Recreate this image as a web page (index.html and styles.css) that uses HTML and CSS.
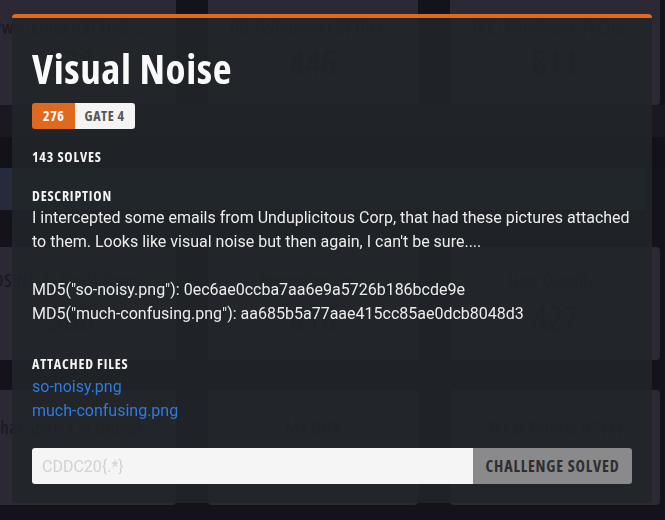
FILE: index.html
```html
<!DOCTYPE html>
<html lang="en">
<head>
<meta charset="utf-8">
<title>Visual Noise</title>
<link rel="stylesheet" href="styles.css">
</head>
<body>
<div class="board">
  <div class="row row-1">
    <div class="card"><div class="card-title">[Pwn (Linux)-3] Find S...</div><div class="card-num">320</div></div>
    <div class="card"><div class="card-title">[RE (Windows)-2] Diss...</div><div class="card-num">446</div></div>
    <div class="card"><div class="card-title">[RE (Windows)-3] Che...</div><div class="card-num">811</div></div>
  </div>
  <div class="band band-a"></div>
  <div class="band band-b"></div>
  <div class="band band-blue"></div>
  <div class="row row-2">
    <div class="card"><div class="card-title">[OSINT-1] Kinda Trans...</div><div class="card-num">380</div></div>
    <div class="card"><div class="card-title">Regarding cip...</div><div class="card-num">416</div></div>
    <div class="card"><div class="card-title">How QueeR...</div><div class="card-num">427</div></div>
  </div>
  <div class="row row-3">
    <div class="card"><div class="card-title">What Sphinx of Undup...</div><div class="card-num">300</div></div>
    <div class="card"><div class="card-title">Ma GIFs</div><div class="card-num">290</div></div>
    <div class="card"><div class="card-title">What Time Is It? [1]</div><div class="card-num">150</div></div>
  </div>
</div>

<div class="modal">
  <h1 class="modal-title">Visual Noise</h1>
  <div class="badge"><span class="badge-pts">276</span><span class="badge-cat">GATE 4</span></div>
  <div class="label solves">143 SOLVES</div>
  <div class="label">DESCRIPTION</div>
  <div class="desc">
    <p>I intercepted some emails from Unduplicitous Corp, that had these pictures attached to them. Looks like visual noise but then again, I can't be sure....</p>
    <p>MD5("so-noisy.png"): 0ec6ae0ccba7aa6e9a5726b186bcde9e<br>MD5("much-confusing.png"): aa685b5a77aae415cc85ae0dcb8048d3</p>
  </div>
  <div class="label files-label">ATTACHED FILES</div>
  <a class="file" href="#">so-noisy.png</a>
  <a class="file" href="#">much-confusing.png</a>
  <form class="flag-form">
    <input class="flag-input" type="text" placeholder="CDDC20{.*}">
    <button class="flag-btn" type="button">CHALLENGE SOLVED</button>
  </form>
</div>
</body>
</html>
```

FILE: styles.css
```css
html, body {
  margin: 0;
  padding: 0;
  background: #14131c;
  overflow: hidden;
  height: 520px;
}

.board {
  width: 665px;
}

.row {
  display: grid;
  grid-template-columns: repeat(3, 210px);
  column-gap: 32px;
  margin-left: -34px;
}

.card {
  background: #2c2934;
  border-radius: 4px;
  display: flex;
  flex-direction: column;
  align-items: center;
  font-family: "Open Sans", "DejaVu Sans Condensed", sans-serif;
  font-stretch: 75%;
  font-weight: 600;
  color: #1b1a21;
  box-sizing: border-box;
  overflow: hidden;
}

.card-title {
  font-size: 18px;
  letter-spacing: 0.4px;
  line-height: 20px;
  white-space: nowrap;
}

.card-num {
  font-size: 35px;
  line-height: 40px;
}

.row-1 {
  margin-top: -20px;
}
.row-1 .card {
  height: 125px;
  padding-top: 37px;
}
.row-1 .card-num { margin-top: 5px; }

.band-a { background: #1a1922; height: 32px; }
.band-b { background: #13121b; height: 31px; }
.band-blue { background: #262a3b; height: 42px; width: 645px; margin-bottom: 37px; }

.row-2 .card {
  height: 113px;
  padding-top: 23px;
}
.row-2 .card-num { margin-top: 8px; }

.row-3 {
  margin-top: 30px;
}
.row-3 .card {
  height: 115px;
  padding-top: 27px;
}
.row-3 .card-num { margin-top: 5px; }

/* modal */
.modal {
  position: fixed;
  top: 14px;
  left: 12px;
  width: 640px;
  box-sizing: border-box;
  padding: 26px 20px 19px;
  background: rgba(33, 37, 41, 0.88);
  border-top: 4px solid #df6a1f;
  border-radius: 4px 4px 3px 3px;
  color: #f1f1f1;
  font-family: Roboto, "Liberation Sans", sans-serif;
}

.modal-title {
  margin: 0;
  font-family: "Open Sans", "DejaVu Sans Condensed", sans-serif;
  font-stretch: 75%;
  font-weight: 700;
  font-size: 41px;
  letter-spacing: 0.6px;
  line-height: 48px;
  color: #fafafa;
}

.badge {
  display: inline-flex;
  margin-top: 11px;
  height: 26px;
  border-radius: 3px;
  overflow: hidden;
  font-family: "Open Sans", "DejaVu Sans Condensed", sans-serif;
  font-stretch: 75%;
  font-weight: 700;
  font-size: 14px;
  letter-spacing: 0.6px;
  line-height: 26px;
}
.badge-pts {
  background: #df6a1f;
  color: #fff;
  padding: 0 10px 0 11px;
}
.badge-cat {
  background: #f4f4f4;
  color: #555;
  padding: 0 10px;
}

.label {
  font-family: "Open Sans", "DejaVu Sans Condensed", sans-serif;
  font-stretch: 75%;
  font-weight: 700;
  font-size: 14px;
  letter-spacing: 0.8px;
  line-height: 20px;
  color: #f4f4f4;
  margin-top: 19px;
}
.solves {
  margin-top: 18px;
}

.desc {
  font-size: 16px;
  line-height: 24px;
  color: #ececec;
}
.desc p {
  margin: 0 0 24px;
}
.desc p:last-child {
  margin-bottom: 0;
}

.files-label {
  margin-top: 28px;
  margin-bottom: 1px;
}

.file {
  display: block;
  width: max-content;
  font-size: 16px;
  line-height: 24px;
  color: #2f7be0;
  text-decoration: none;
}

.flag-form {
  display: flex;
  margin-top: 25px;
  height: 36px;
  border-radius: 3px;
  overflow: hidden;
}

.flag-input {
  flex: 1;
  min-width: 0;
  margin: 0;
  border: 0;
  outline: 0;
  padding: 0 10px;
  background: #f5f5f5;
  font-family: Roboto, "Liberation Sans", sans-serif;
  font-size: 16px;
  color: #333;
}
.flag-input::placeholder {
  color: #d2d2d2;
}

.flag-btn {
  margin: 0;
  border: 0;
  padding: 0 4px;
  width: 159px;
  white-space: nowrap;
  background: #8a898c;
  color: #2e2e30;
  font-family: "Open Sans", "DejaVu Sans Condensed", sans-serif;
  font-stretch: 75%;
  font-weight: 700;
  font-size: 16px;
  letter-spacing: 0.8px;
}
```
